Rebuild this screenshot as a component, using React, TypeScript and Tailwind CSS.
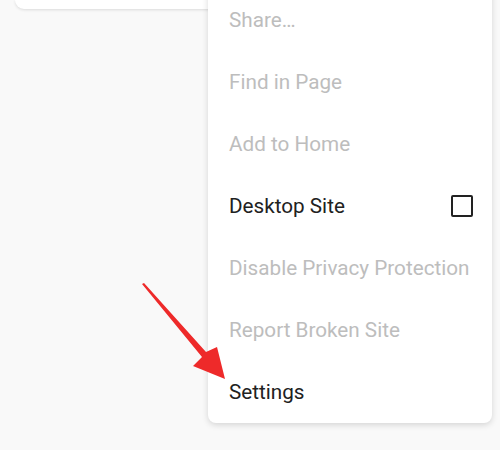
const items = [
  { label: "Share…", enabled: false },
  { label: "Find in Page", enabled: false },
  { label: "Add to Home", enabled: false },
  { label: "Desktop Site", enabled: true, checkbox: true },
  { label: "Disable Privacy Protection", enabled: false },
  { label: "Report Broken Site", enabled: false },
  { label: "Settings", enabled: true },
]

function Arrow() {
  return (
    <svg className="absolute left-0 top-0 pointer-events-none" width="500" height="450" viewBox="0 0 500 450">
      <polygon points="142,284 144,283 206,352 217,347 225,379 193,366 202,357" fill="#ee2a2a" />
    </svg>
  )
}

export default function App() {
  return (
    <div className="relative w-[500px] h-[450px] overflow-hidden bg-[#f9f9f9] font-['Roboto',sans-serif]">
      {/* page card behind the menu */}
      <div className="ml-[15px] mr-[30px] h-[9px] rounded-b-[20px] bg-white shadow-[0_1px_3px_rgba(0,0,0,0.12)]" />

      {/* overflow menu */}
      <div className="absolute left-[208px] top-[-11px] w-[284px] rounded-b-[8px] bg-white shadow-[0_2px_6px_rgba(0,0,0,0.15)]">
        {items.map((item) => (
          <div key={item.label} className="flex h-[62px] items-center justify-between pl-[21px] pr-[19px]">
            <span
              className={
                item.enabled
                  ? "text-[20.7px] leading-[28px] text-[#212121]"
                  : "text-[20.7px] leading-[28px] text-[#bdbdbd]"
              }
            >
              {item.label}
            </span>
            {item.checkbox && (
              <span className="block h-[22px] w-[22px] rounded-[2px] border-[2.5px] border-[#222]" />
            )}
          </div>
        ))}
      </div>

      <Arrow />
    </div>
  )
}
